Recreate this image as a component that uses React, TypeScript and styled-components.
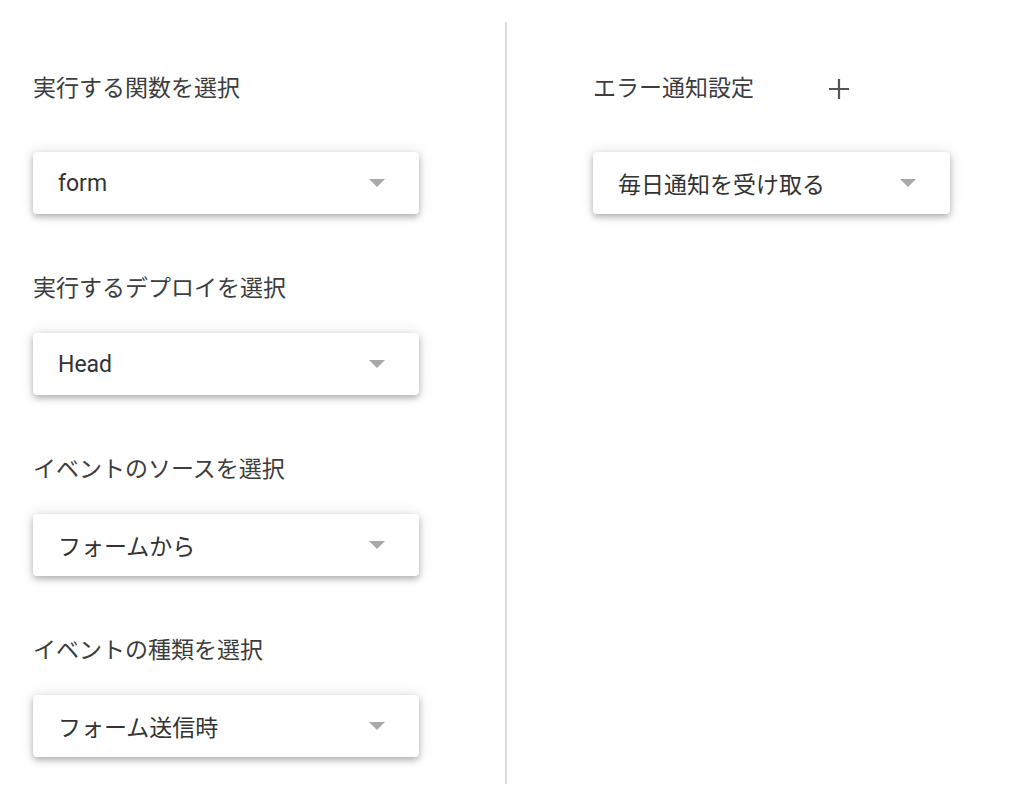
import React from "react";
import styled, { createGlobalStyle } from "styled-components";

const GlobalStyle = createGlobalStyle`
  html, body {
    margin: 0;
    padding: 0;
    background: #ffffff;
  }
  body {
    font-family: Roboto, "Noto Sans CJK JP", sans-serif;
    color: #333333;
  }
`;

const Page = styled.div`
  display: flex;
  flex-direction: row;
  align-items: stretch;
  padding-top: 22px;
  height: 762px;
`;

const Column = styled.div<{ $width: number; $left: number }>`
  display: flex;
  flex-direction: column;
  flex: none;
  width: ${(p) => p.$width}px;
  padding-left: ${(p) => p.$left}px;
  padding-right: 86px;
  padding-top: 51px;
`;

const Divider = styled.div`
  width: 2px;
  background: #dcdcdc;
  flex: none;
`;

const Section = styled.div<{ $first?: boolean }>`
  display: flex;
  flex-direction: column;
  gap: ${(p) => (p.$first ? 47 : 28)}px;
  margin-bottom: 59px;
`;

const LabelRow = styled.div`
  display: flex;
  align-items: center;
  height: 32px;
`;

const Label = styled.span`
  font-size: 23px;
  line-height: 32px;
  color: #3d3d3d;
  white-space: nowrap;
`;

const AddButton = styled.span`
  display: inline-flex;
  align-items: center;
  justify-content: center;
  margin-left: 74px;
  width: 22px;
  height: 22px;
`;

const Select = styled.div`
  display: flex;
  align-items: center;
  justify-content: space-between;
  height: 62px;
  box-sizing: border-box;
  padding: 0 34px 0 25px;
  background: #ffffff;
  border-radius: 4px;
  box-shadow: 0 3px 6px rgba(0, 0, 0, 0.27), 0 0 16px rgba(0, 0, 0, 0.11);
`;

const SelectText = styled.span`
  font-size: 23px;
  color: #333333;
  white-space: nowrap;
`;

const Caret = styled.span`
  width: 0;
  height: 0;
  border-left: 8px solid transparent;
  border-right: 8px solid transparent;
  border-top: 8px solid #a9a9a9;
`;

const Dropdown = ({ value }: { value: string }) => (
  <Select>
    <SelectText>{value}</SelectText>
    <Caret />
  </Select>
);

const leftItems = [
  { label: "実行する関数を選択", value: "form" },
  { label: "実行するデプロイを選択", value: "Head" },
  { label: "イベントのソースを選択", value: "フォームから" },
  { label: "イベントの種類を選択", value: "フォーム送信時" },
];

export default function App() {
  return (
    <>
      <GlobalStyle />
      <Page>
        <Column $width={386} $left={33}>
          {leftItems.map((item, i) => (
            <Section key={item.label} $first={i === 0}>
              <LabelRow>
                <Label>{item.label}</Label>
              </LabelRow>
              <Dropdown value={item.value} />
            </Section>
          ))}
        </Column>
        <Divider />
        <Column $width={357} $left={86}>
          <Section $first>
            <LabelRow>
              <Label>エラー通知設定</Label>
              <AddButton>
                <svg width="22" height="22" viewBox="0 0 22 22">
                  <path d="M11 1v20M1 11h20" stroke="#555" strokeWidth="2.2" fill="none" />
                </svg>
              </AddButton>
            </LabelRow>
            <Dropdown value="毎日通知を受け取る" />
          </Section>
        </Column>
      </Page>
    </>
  );
}
